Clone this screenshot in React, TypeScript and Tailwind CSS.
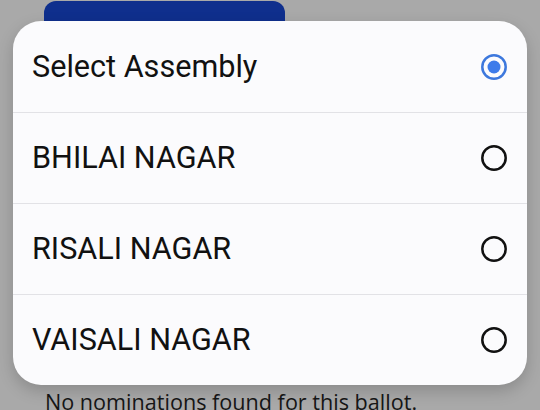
import React from 'react';

const assemblies = ['Select Assembly', 'BHILAI NAGAR', 'RISALI NAGAR', 'VAISALI NAGAR'];

const Radio: React.FC<{ checked: boolean }> = ({ checked }) => (
  <svg width="28" height="28" viewBox="0 0 28 28">
    <circle
      cx="14"
      cy="14"
      r="11.7"
      fill="none"
      stroke={checked ? '#3d78dd' : '#111111'}
      strokeWidth="2.5"
    />
    {checked && <circle cx="14" cy="14" r="6.5" fill="#3d7bea" />}
  </svg>
);

const App: React.FC = () => {
  const selected = 0;

  return (
    <div className="relative h-[410px] w-[540px] overflow-hidden bg-[#a9a9a9] font-['Roboto',sans-serif]">
      {/* page behind the modal */}
      <div className="flex h-full flex-col">
        <div className="ml-[44px] mt-[1px] flex h-[56px] w-[241px] items-end justify-center rounded-[12px] bg-[#0f2f8d] pb-[9px] text-[20px] font-medium text-[#7d8bb8]">
          View Ballot Details
        </div>
        <div className="flex-1" />
        <p className="mb-[-7px] ml-[45px] font-['Open_Sans',sans-serif] text-[21.6px] leading-[30px] text-[#161616]">
          No nominations found for this ballot.
        </p>
      </div>

      {/* assembly picker */}
      <div className="absolute left-[13px] top-[21px] w-[514px] overflow-hidden rounded-[28px] bg-[#fbfbfd] shadow-[0_6px_16px_rgba(0,0,0,0.18)]">
        <ul>
          {assemblies.map((name, i) => (
            <li
              key={name}
              className={`flex h-[91px] items-center justify-between pl-[19px] pr-[19px] ${
                i > 0 ? 'border-t border-[#e2e2e6]' : ''
              }`}
            >
              <span className="text-[30.6px] text-[#111111]">{name}</span>
              <Radio checked={i === selected} />
            </li>
          ))}
        </ul>
      </div>
    </div>
  );
};

export default App;
